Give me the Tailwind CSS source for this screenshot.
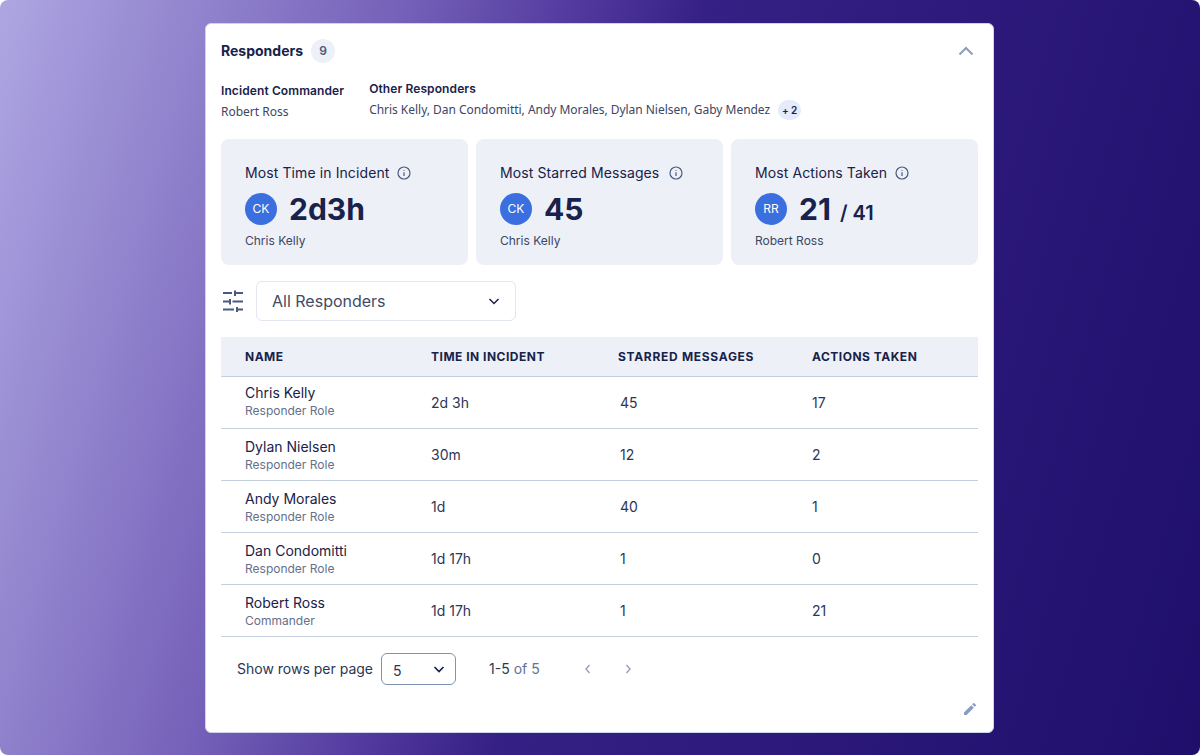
<!DOCTYPE html>
<html lang="en">
<head>
  <meta charset="UTF-8" />
  <title>Responders</title>
  <script src="https://cdn.jsdelivr.net/npm/@tailwindcss/browser@4"></script>
</head>
<body class="h-[755px] overflow-hidden bg-white font-['Inter',sans-serif] text-[#18224a]">
  <div class="h-[755px] rounded-lg bg-[linear-gradient(106deg,#aea6e2_0%,#7460b8_29%,#4b3399_43%,#352085_50%,#1f0f6b_100%)] pt-[23px]">
    <div class="ml-[205px] h-[710px] w-[789px] rounded-md border border-[#cdd5e8] bg-white px-[15px]">

      <!-- header -->
      <div class="flex h-[54px] items-center justify-between">
        <div class="flex items-center gap-2">
          <h2 class="text-sm font-bold leading-5">Responders</h2>
          <span class="flex h-6 w-6 items-center justify-center rounded-full bg-[#edf0f6] text-xs font-semibold text-[#4a5a80]">9</span>
        </div>
        <svg class="mr-1 h-4 w-4 text-[#8f9cba]" viewBox="0 0 16 16" fill="none" stroke="currentColor" stroke-width="2"><path d="M1.500 11.500 8 5l6.500 6.500"/></svg>
      </div>

      <div class="flex h-[61px] gap-[25px]">
        <div class="pt-[3px]">
          <div class="text-xs font-semibold leading-5 tracking-[0.1px]">Incident Commander</div>
          <div class="mt-px font-['Noto_Sans',sans-serif] text-xs leading-5 text-[#3c4766]">Robert Ross</div>
        </div>
        <div class="pt-px">
          <div class="text-xs font-semibold leading-5 tracking-[0.1px]">Other Responders</div>
          <div class="mt-[1px] flex items-center gap-2 font-['Noto_Sans',sans-serif] text-xs leading-5 tracking-[-0.03px] text-[#3c4766]">
            Chris Kelly, Dan Condomitti, Andy Morales, Dylan Nielsen, Gaby Mendez
            <span class="flex h-5 w-[23px] items-center justify-center rounded-full bg-[#e4ebfb] font-['Inter',sans-serif] text-[10px] font-semibold text-[#18224a]">+ 2</span>
          </div>
        </div>
      </div>

      <!-- stat cards -->
      <div class="grid grid-cols-3 gap-2">
        <div class="h-[126px] rounded-lg bg-[#edf0f6] px-6 pt-6">
          <div class="flex items-center gap-2 text-sm leading-5 tracking-[0.1px]">Most Time in Incident
            <svg class="h-[14px] w-[14px] text-[#4a5a80]" viewBox="0 0 14 14" fill="none" stroke="currentColor" stroke-width="1.200"><circle cx="7" cy="7" r="6"/><path d="M7 6.300V10M7 4v.800"/></svg>
          </div>
          <div class="mt-[10px] flex h-8 items-center gap-3">
            <span class="flex h-8 w-8 items-center justify-center rounded-full bg-[#3b6fe0] text-xs text-white">CK</span>
            <span class="text-[30px] font-bold leading-8">2d3h</span>
          </div>
          <div class="mt-[6px] text-xs leading-5 text-[#3c4766]">Chris Kelly</div>
        </div>
        <div class="h-[126px] rounded-lg bg-[#edf0f6] px-6 pt-6">
          <div class="flex items-center gap-2 text-sm leading-5 tracking-[0.1px]">Most Starred Messages
            <svg class="ml-0.5 h-[14px] w-[14px] text-[#4a5a80]" viewBox="0 0 14 14" fill="none" stroke="currentColor" stroke-width="1.200"><circle cx="7" cy="7" r="6"/><path d="M7 6.300V10M7 4v.800"/></svg>
          </div>
          <div class="mt-[10px] flex h-8 items-center gap-3">
            <span class="flex h-8 w-8 items-center justify-center rounded-full bg-[#3b6fe0] text-xs text-white">CK</span>
            <span class="text-[30px] font-bold leading-8">45</span>
          </div>
          <div class="mt-[6px] text-xs leading-5 text-[#3c4766]">Chris Kelly</div>
        </div>
        <div class="h-[126px] rounded-lg bg-[#edf0f6] px-6 pt-6">
          <div class="flex items-center gap-2 text-sm leading-5 tracking-[0.1px]">Most Actions Taken
            <svg class="h-[14px] w-[14px] text-[#4a5a80]" viewBox="0 0 14 14" fill="none" stroke="currentColor" stroke-width="1.200"><circle cx="7" cy="7" r="6"/><path d="M7 6.300V10M7 4v.800"/></svg>
          </div>
          <div class="mt-[10px] flex h-8 items-center gap-3">
            <span class="flex h-8 w-8 items-center justify-center rounded-full bg-[#3b6fe0] text-xs text-white">RR</span>
            <span class="text-[30px] font-bold leading-8">21 <span class="ml-0.5 text-xl font-semibold leading-none">/ 41</span></span>
          </div>
          <div class="mt-[6px] text-xs leading-5 text-[#3c4766]">Robert Ross</div>
        </div>
      </div>

      <!-- filter -->
      <div class="mt-4 flex items-center gap-3">
        <svg class="ml-px h-[22px] w-[22px] text-[#4a5a80]" viewBox="0 0 22 22" fill="none" stroke="currentColor" stroke-width="2"><path d="M1 3h9M13 3h8M13 .500v5.500M1 11.500h7M8 9v5.500M10.500 11.500H21M1 19.500h11M15 19.500h6M15 17v5"/></svg>
        <div class="flex h-10 w-[260px] items-center justify-between rounded-md border border-[#e2e6ef] px-[15px] text-base text-[#414b66]">
          All Responders
          <svg class="h-3 w-3 text-[#18224a]" viewBox="0 0 12 12" fill="none" stroke="currentColor" stroke-width="1.500"><path d="M1.500 4 6 8.500 10.500 4"/></svg>
        </div>
      </div>

      <!-- table -->
      <div class="mt-4">
        <div class="grid h-10 grid-cols-[210px_187px_194px_1fr] items-center border-b border-[#c5d0df] bg-[#edf0f6] text-xs font-bold tracking-[0.5px]">
          <div class="pl-6">NAME</div><div>TIME IN INCIDENT</div><div class="tracking-[0.7px]">STARRED MESSAGES</div><div>ACTIONS TAKEN</div>
        </div>
        <div class="grid h-[52px] grid-cols-[210px_187px_194px_1fr] items-center border-b border-[#c5d0df] text-sm text-[#2c3654]">
          <div class="h-full pl-6 pt-[7px]"><div class="leading-[18px] text-[#18224a]">Chris Kelly</div><div class="mt-px text-xs leading-4 text-[#66708a]">Responder Role</div></div>
          <div class="pt-px">2d 3h</div><div class="pl-0.5 pt-px">45</div><div class="pt-px">17</div>
        </div>
        <div class="grid h-[52px] grid-cols-[210px_187px_194px_1fr] items-center border-b border-[#c5d0df] text-sm text-[#2c3654]">
          <div class="h-full pl-6 pt-[9px]"><div class="leading-[18px] text-[#18224a]">Dylan Nielsen</div><div class="mt-px text-xs leading-4 text-[#66708a]">Responder Role</div></div>
          <div>30m</div><div class="pl-0.5">12</div><div>2</div>
        </div>
        <div class="grid h-[52px] grid-cols-[210px_187px_194px_1fr] items-center border-b border-[#c5d0df] text-sm text-[#2c3654]">
          <div class="h-full pl-6 pt-[9px]"><div class="leading-[18px] text-[#18224a]">Andy Morales</div><div class="mt-px text-xs leading-4 text-[#66708a]">Responder Role</div></div>
          <div>1d</div><div class="pl-0.5">40</div><div>1</div>
        </div>
        <div class="grid h-[52px] grid-cols-[210px_187px_194px_1fr] items-center border-b border-[#c5d0df] text-sm text-[#2c3654]">
          <div class="h-full pl-6 pt-[9px]"><div class="leading-[18px] text-[#18224a]">Dan Condomitti</div><div class="mt-px text-xs leading-4 text-[#66708a]">Responder Role</div></div>
          <div>1d 17h</div><div class="pl-0.5">1</div><div>0</div>
        </div>
        <div class="grid h-[52px] grid-cols-[210px_187px_194px_1fr] items-center border-b border-[#c5d0df] text-sm text-[#2c3654]">
          <div class="h-full pl-6 pt-[9px]"><div class="leading-[18px] text-[#18224a]">Robert Ross</div><div class="mt-px text-xs leading-4 text-[#66708a]">Commander</div></div>
          <div>1d 17h</div><div class="pl-0.5">1</div><div>21</div>
        </div>
      </div>

      <!-- pagination -->
      <div class="mt-4 flex h-8 items-center pl-4 text-sm text-[#2c3654]">
        <span>Show rows per page</span>
        <div class="ml-2 flex h-8 w-[75px] items-center justify-between rounded-md border border-[#7f93b5] pl-[11px] pr-[10px]">
          <span class="pt-[3px]">5</span>
          <svg class="h-3 w-3 text-[#18224a]" viewBox="0 0 12 12" fill="none" stroke="currentColor" stroke-width="1.700"><path d="M1.500 4 6 8.500 10.500 4"/></svg>
        </div>
        <span class="ml-[33px]">1-5 <span class="text-[#5f7199]">of 5</span></span>
        <svg class="ml-[42px] h-3 w-3 text-[#8f9cba]" viewBox="0 0 12 12" fill="none" stroke="currentColor" stroke-width="1.300"><path d="M7.500 2 4 6l3.500 4"/></svg>
        <svg class="ml-7 h-3 w-3 text-[#8f9cba]" viewBox="0 0 12 12" fill="none" stroke="currentColor" stroke-width="1.300"><path d="M4.500 2 8 6l-3.500 4"/></svg>
      </div>

      <div class="mt-[18px] flex justify-end pr-[2px]">
        <svg class="h-3 w-3 text-[#8b9bbd]" viewBox="0 0 14 14" fill="currentColor"><path d="M0 14v-3L8.500 2.500l3 3L3 14zM9.500 1.500 10.800.200a.8.800 0 0 1 1.100 0l1.900 1.900a.8.800 0 0 1 0 1.100L12.500 4.500z"/></svg>
      </div>
    </div>
  </div>
</body>
</html>
